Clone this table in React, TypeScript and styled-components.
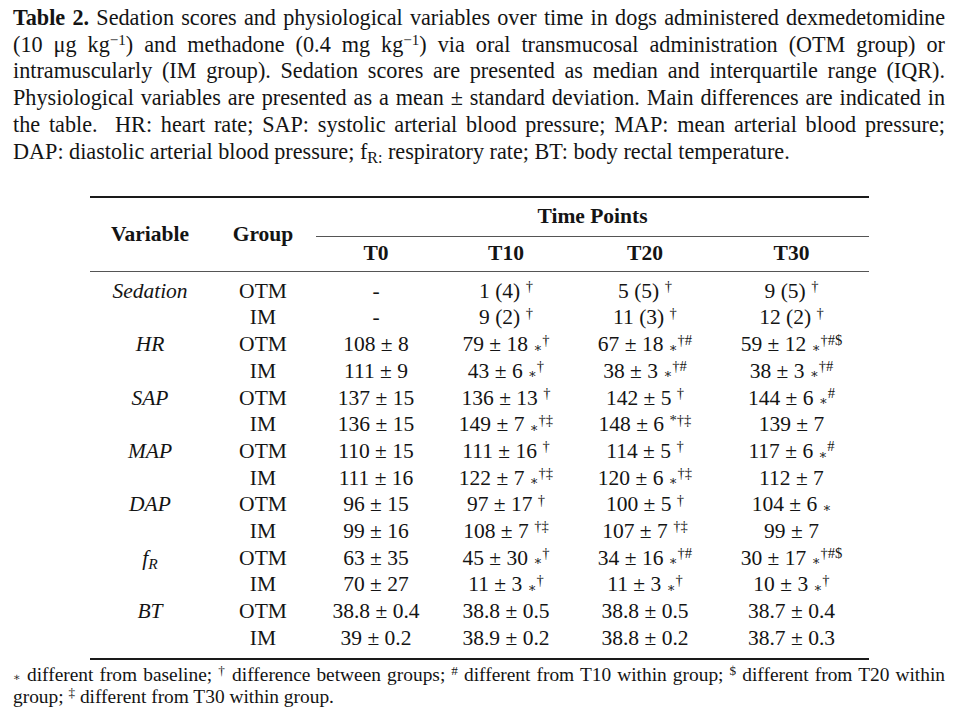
import styled, { createGlobalStyle } from "styled-components";

const GlobalStyle = createGlobalStyle`
  body {
    margin: 0;
    background: #fff;
    color: #141414;
    font-family: "Liberation Serif", "DejaVu Serif", serif;
  }
`;

const Page = styled.div`
  width: 932px;
  padding: 5px 14px 0 13px;
`;

const Caption = styled.div`
  font-size: 22.2px;
  line-height: 26.7px;
`;

const Line = styled.div<{ $last?: boolean }>`
  text-align: justify;
  text-align-last: ${(p) => (p.$last ? "left" : "justify")};
  white-space: nowrap;
`;

// raised marks are shifted with a relative offset so the line box keeps its height
const Sup = styled.span`
  position: relative;
  top: -0.45em;
  font-size: 0.68em;
  line-height: 0;
`;

const Sub = styled.span`
  position: relative;
  top: 0.28em;
  font-size: 0.72em;
  line-height: 0;
`;

const Table = styled.table`
  margin: 31px 0 0 77px;
  width: 779px;
  border-collapse: collapse;
  font-size: 21.5px;
  border-top: 2px solid #1a1a1a;
  border-bottom: 2px solid #1a1a1a;
  col:nth-child(1) { width: 120px; }
  col:nth-child(2) { width: 106px; }
  col:nth-child(3) { width: 120px; }
  col:nth-child(4) { width: 140px; }
  col:nth-child(5) { width: 138px; }
  col:nth-child(6) { width: 155px; }
`;

const HeadRow = styled.tr<{ $h: number; $rule?: boolean }>`
  height: ${(p) => p.$h}px;
  border-bottom: ${(p) => (p.$rule ? "1px solid #555" : "none")};
`;

const Th = styled.th<{ $rule?: boolean }>`
  font-weight: bold;
  text-align: center;
  vertical-align: middle;
  padding: 0;
  border-bottom: ${(p) => (p.$rule ? "1px solid #555" : "none")};
`;

const Row = styled.tr<{ $pad?: "top" | "bottom" }>`
  td {
    padding-top: ${(p) => (p.$pad === "top" ? "6px" : "0")};
    padding-bottom: ${(p) => (p.$pad === "bottom" ? "6px" : "0")};
  }
`;

const Td = styled.td<{ $italic?: boolean }>`
  text-align: center;
  height: 26.7px;
  line-height: 26.7px;
  white-space: nowrap;
  font-style: ${(p) => (p.$italic ? "italic" : "normal")};
`;

const Star = styled.span`
  position: relative;
  top: 0.05em;
  font-family: "DejaVu Serif", serif;
  font-size: 0.6em;
  line-height: 0;
`;

const Footnote = styled.div`
  margin-top: 4px;
  font-size: 19.4px;
  line-height: 22px;
`;

type Cell = { v: string; star?: boolean; sup?: string };

type DataRow = { variable?: React.ReactNode; group: string; cells: Cell[] };

const c = (v: string, star?: boolean, sup?: string): Cell => ({ v, star, sup });

const rows: DataRow[] = [
  { variable: "Sedation", group: "OTM", cells: [c("-"), c("1 (4)", false, "†"), c("5 (5)", false, "†"), c("9 (5)", false, "†")] },
  { group: "IM", cells: [c("-"), c("9 (2)", false, "†"), c("11 (3)", false, "†"), c("12 (2)", false, "†")] },
  { variable: "HR", group: "OTM", cells: [c("108 ± 8"), c("79 ± 18", true, "†"), c("67 ± 18", true, "†#"), c("59 ± 12", true, "†#$")] },
  { group: "IM", cells: [c("111 ± 9"), c("43 ± 6", true, "†"), c("38 ± 3", true, "†#"), c("38 ± 3", true, "†#")] },
  { variable: "SAP", group: "OTM", cells: [c("137 ± 15"), c("136 ± 13", false, "†"), c("142 ± 5", false, "†"), c("144 ± 6", true, "#")] },
  { group: "IM", cells: [c("136 ± 15"), c("149 ± 7", true, "†‡"), c("148 ± 6", false, "*†‡"), c("139 ± 7")] },
  { variable: "MAP", group: "OTM", cells: [c("110 ± 15"), c("111 ± 16", false, "†"), c("114 ± 5", false, "†"), c("117 ± 6", true, "#")] },
  { group: "IM", cells: [c("111 ± 16"), c("122 ± 7", true, "†‡"), c("120 ± 6", true, "†‡"), c("112 ± 7")] },
  { variable: "DAP", group: "OTM", cells: [c("96 ± 15"), c("97 ± 17", false, "†"), c("100 ± 5", false, "†"), c("104 ± 6", true)] },
  { group: "IM", cells: [c("99 ± 16"), c("108 ± 7", false, "†‡"), c("107 ± 7", false, "†‡"), c("99 ± 7")] },
  { variable: <>f<Sub>R</Sub></>, group: "OTM", cells: [c("63 ± 35"), c("45 ± 30", true, "†"), c("34 ± 16", true, "†#"), c("30 ± 17", true, "†#$")] },
  { group: "IM", cells: [c("70 ± 27"), c("11 ± 3", true, "†"), c("11 ± 3", true, "†"), c("10 ± 3", true, "†")] },
  { variable: "BT", group: "OTM", cells: [c("38.8 ± 0.4"), c("38.8 ± 0.5"), c("38.8 ± 0.5"), c("38.7 ± 0.4")] },
  { group: "IM", cells: [c("39 ± 0.2"), c("38.9 ± 0.2"), c("38.8 ± 0.2"), c("38.7 ± 0.3")] },
];

const Value = ({ cell }: { cell: Cell }) => (
  <>
    {cell.v}
    {(cell.star || cell.sup) && " "}
    {cell.star && <Star>∗</Star>}
    {cell.sup && <Sup>{cell.sup}</Sup>}
  </>
);

export default function App() {
  return (
    <Page>
      <GlobalStyle />
      <Caption>
        <Line>
          <b>Table 2.</b> Sedation scores and physiological variables over time in dogs administered dexmedetomidine
        </Line>
        <Line>
          (10 μg kg<Sup>−1</Sup>) and methadone (0.4 mg kg<Sup>−1</Sup>) via oral transmucosal administration (OTM group) or
        </Line>
        <Line>
          intramuscularly (IM group). Sedation scores are presented as median and interquartile range (IQR).
        </Line>
        <Line>
          Physiological variables are presented as a mean ± standard deviation. Main differences are indicated in
        </Line>
        <Line>
          the table.&nbsp; HR: heart rate; SAP: systolic arterial blood pressure; MAP: mean arterial blood pressure;
        </Line>
        <Line $last>
          DAP: diastolic arterial blood pressure; f<Sub>R:</Sub> respiratory rate; BT: body rectal temperature.
        </Line>
      </Caption>

      <Table>
        <colgroup>
          <col />
          <col />
          <col />
          <col />
          <col />
          <col />
        </colgroup>
        <thead>
          <HeadRow $h={39}>
            <Th rowSpan={2}>Variable</Th>
            <Th rowSpan={2}>Group</Th>
            <Th colSpan={4} $rule>
              Time Points
            </Th>
          </HeadRow>
          <HeadRow $h={35} $rule>
            <Th>T0</Th>
            <Th>T10</Th>
            <Th>T20</Th>
            <Th>T30</Th>
          </HeadRow>
        </thead>
        <tbody>
          {rows.map((r, i) => (
            <Row key={i} $pad={i === 0 ? "top" : i === rows.length - 1 ? "bottom" : undefined}>
              <Td $italic>{r.variable}</Td>
              <Td>{r.group}</Td>
              {r.cells.map((cell, j) => (
                <Td key={j}>
                  <Value cell={cell} />
                </Td>
              ))}
            </Row>
          ))}
        </tbody>
      </Table>

      <Footnote>
        <Line>
          <Star>∗</Star> different from baseline; <Sup>†</Sup> difference between groups; <Sup>#</Sup> different from T10 within group; <Sup>$</Sup> different from T20 within
        </Line>
        <Line $last>
          group; <Sup>‡</Sup> different from T30 within group.
        </Line>
      </Footnote>
    </Page>
  );
}
